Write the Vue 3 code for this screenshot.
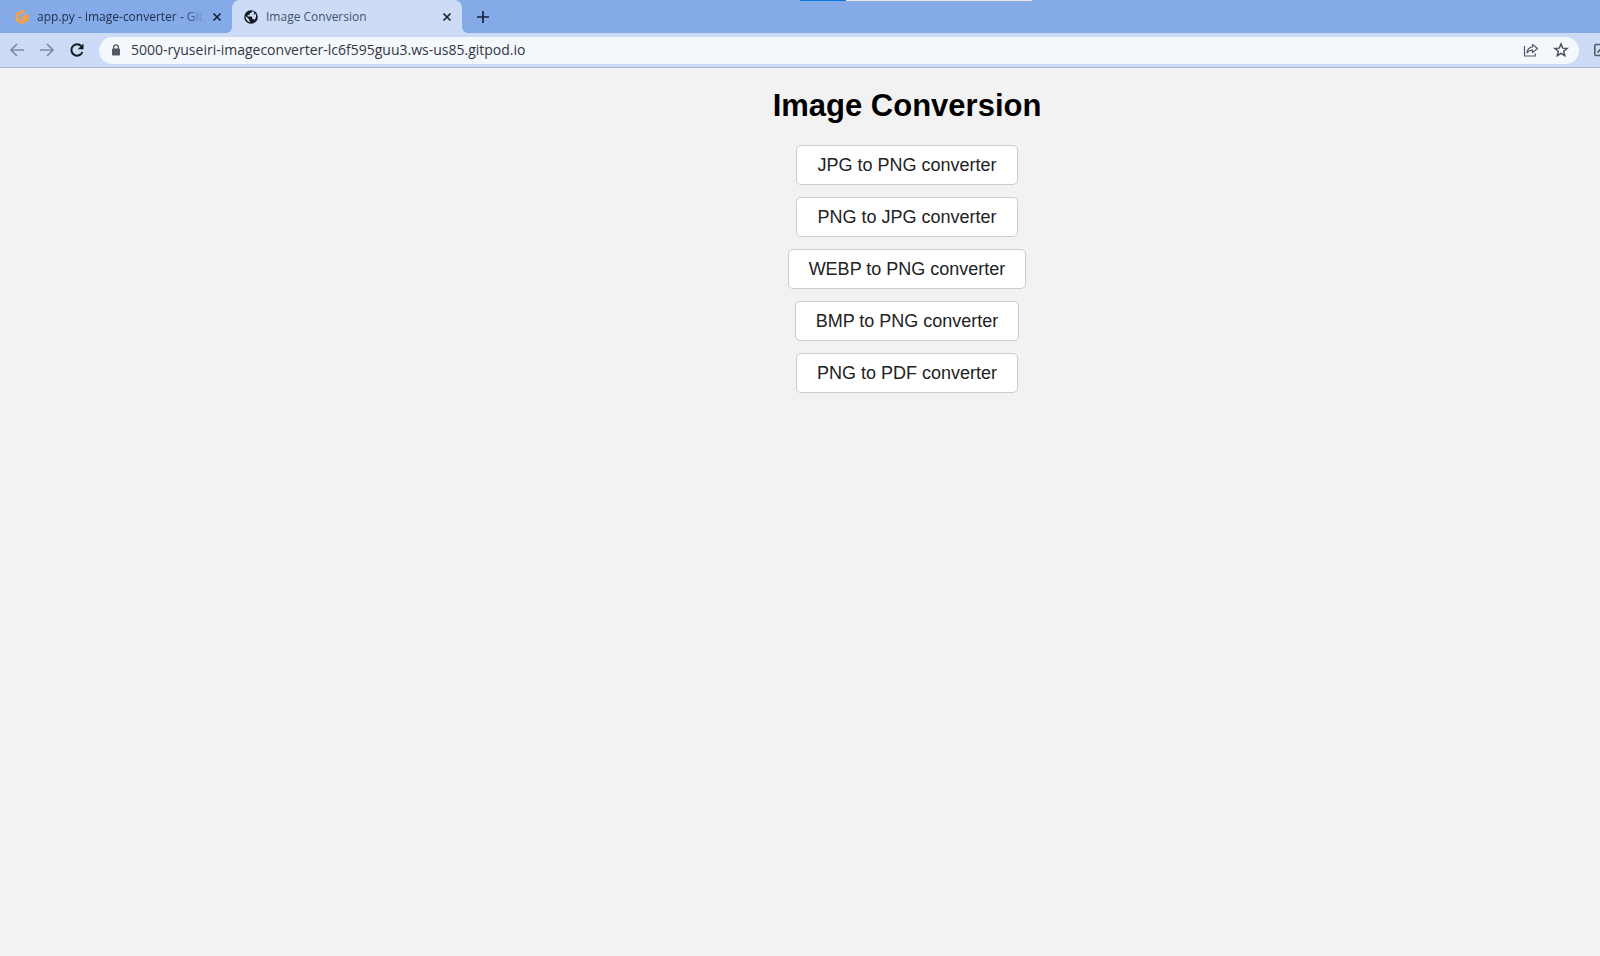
<script setup>
const converters = [
  'JPG to PNG converter',
  'PNG to JPG converter',
  'WEBP to PNG converter',
  'BMP to PNG converter',
  'PNG to PDF converter',
]
</script>

<template>
  <div class="browser">
    <div class="load-strip"></div>
    <header class="tabs">
      <div class="tab first">
        <svg class="fav" viewBox="0 0 16 16" aria-hidden="true">
          <path d="M9.2 2.300 3 5.500V10.800L8 13.600 13 10.800V6.600L8.300 9.100" fill="none" stroke="#ff9f3c" stroke-width="2.900" stroke-linecap="round" stroke-linejoin="round" />
        </svg>
        <span class="title faded">app.py - image-converter - Git</span>
        <button class="close" aria-label="Close app.py tab">
          <svg viewBox="0 0 10 10"><path d="M1.5 1.5l7 7m0-7l-7 7" stroke="#17233a" stroke-width="1.7" /></svg>
        </button>
      </div>
      <div class="tab active">
        <svg class="fav" viewBox="0 0 16 16" aria-hidden="true">
          <circle cx="8" cy="8" r="6.8" fill="#15181e" />
          <path d="M8.8 1.9v1.2q0 1-1 1H6.7v1.2q0 .7-.8.7H4.7v1.6h3.7q.8 0 .8.8v1.7h.9q.9 0 1.2.8a5.4 5.4 0 0 0 1.1-6.3l-1.1 1.1H9.8V5.4h1.3V3.3A5.2 5.2 0 0 0 8.8 1.9zM2.7 7.1l3.5 3.4v.8q0 .8.9.9v1.1A5.4 5.4 0 0 1 2.7 7.1z" fill="#ccdcf6" />
        </svg>
        <span class="title">Image Conversion</span>
        <button class="close" aria-label="Close Image Conversion tab">
          <svg viewBox="0 0 10 10"><path d="M1.5 1.5l7 7m0-7l-7 7" stroke="#17233a" stroke-width="1.7" /></svg>
        </button>
      </div>
      <button class="new-tab" aria-label="New tab">
        <svg viewBox="0 0 12 12"><path d="M6 0v12M0 6h12" stroke="#17233a" stroke-width="1.7" /></svg>
      </button>
    </header>

    <div class="toolbar">
      <button class="nav" aria-label="Back">
        <svg viewBox="0 0 16 16"><path d="M15 8H2.5M8 2L2 8l6 6" fill="none" stroke="#7f8ba3" stroke-width="1.7" /></svg>
      </button>
      <button class="nav" aria-label="Forward">
        <svg viewBox="0 0 16 16"><path d="M1 8h12.500M8 2l6 6-6 6" fill="none" stroke="#7f8ba3" stroke-width="1.7" /></svg>
      </button>
      <button class="nav" aria-label="Reload">
        <svg viewBox="0 0 16 16">
          <path d="M13.400 10A5.700 5.700 0 1 1 12.300 4.100" fill="none" stroke="#17191e" stroke-width="2" />
          <path d="M14.500 1.500v5.700H8.800z" fill="#17191e" />
        </svg>
      </button>
      <div class="omnibox">
        <svg class="lock" viewBox="0 0 10 12" aria-hidden="true">
          <path d="M2.700 5V3.200a2.300 2.300 0 0 1 4.600 0V5" fill="none" stroke="#55595f" stroke-width="1.300" />
          <rect x="1" y="4.500" width="8" height="7" rx="1" fill="#55595f" />
        </svg>
        <input class="url" type="text" aria-label="Address" value="5000-ryuseiri-imageconverter-lc6f595guu3.ws-us85.gitpod.io" />
        <button class="action" aria-label="Share this page">
          <svg viewBox="0 0 16 16" fill="none" stroke="#555b65" stroke-width="1.200">
            <path d="M1.500 4v10h10.800v-2.500" />
            <path d="M9.500 2.500l5 4-5 4V8.200Q6 8 4 10.800q.4-5.300 5.500-6z" stroke-linejoin="round" />
          </svg>
        </button>
        <button class="action" aria-label="Bookmark this page">
          <svg viewBox="0 0 16 16"><path d="M8 1.900l1.700 4.200 4.500.3-3.500 2.900 1.100 4.400L8 11.300l-3.800 2.400 1.100-4.400-3.500-2.900 4.500-.3z" fill="none" stroke="#454a53" stroke-width="1.400" /></svg>
        </button>
      </div>
      <button class="extension" aria-label="Extension">
        <svg viewBox="0 0 16 16" fill="none" stroke="#555b65" stroke-width="1.600">
          <rect x="1.800" y="2.500" width="12" height="11" rx="1" />
          <path d="M4.500 10.500L9 6" />
        </svg>
      </button>
    </div>

    <main class="page">
      <h1>Image Conversion</h1>
      <button v-for="name in converters" :key="name" class="convert">{{ name }}</button>
    </main>
  </div>
</template>

<style>
body {
  background: #f2f2f2;
}
</style>

<style scoped>
.browser {
  position: relative;
  min-height: 100vh;
  overflow: hidden;
  background: #f2f2f2;
  font-family: "Open Sans", "Noto Sans", sans-serif;
}
button {
  padding: 0;
  border: 0;
  background: none;
}
svg {
  display: block;
}
.load-strip {
  position: absolute;
  top: 0;
  left: 50%;
  width: 232px;
  height: 1px;
  background: linear-gradient(to right, #0878d8 46px, #e6e6e6 46px);
}
.tabs {
  display: flex;
  height: 33px;
  background: #84abe8;
}
.tab {
  display: flex;
  align-items: center;
  box-sizing: border-box;
  width: 230px;
  padding: 0 10px 0 11px;
}
.tab.first {
  width: 232px;
  padding-left: 14px;
}
.tab.active {
  position: relative;
  background: #ccdcf6;
  border-radius: 8px 8px 0 0;
}
.tab.active::before,
.tab.active::after {
  content: "";
  position: absolute;
  bottom: 0;
  width: 6px;
  height: 6px;
}
.tab.active::before {
  right: 100%;
  background: radial-gradient(circle at 0 0, transparent 6px, #ccdcf6 6px);
}
.tab.active::after {
  left: 100%;
  background: radial-gradient(circle at 100% 0, transparent 6px, #ccdcf6 6px);
}
.fav {
  flex: none;
  width: 16px;
  height: 16px;
  margin-right: 7px;
}
.title {
  flex: 1;
  min-width: 0;
  overflow: hidden;
  white-space: nowrap;
  font-size: 12px;
  line-height: 18px;
  color: #46536a;
}
.faded {
  color: #20304c;
  mask-image: linear-gradient(to right, #000 calc(100% - 24px), transparent);
}
.close {
  flex: none;
  margin-left: 6px;
}
.close svg {
  width: 10px;
  height: 10px;
}
.new-tab {
  margin-left: 15px;
}
.new-tab svg {
  width: 12px;
  height: 12px;
}
.toolbar {
  display: flex;
  align-items: center;
  gap: 14px;
  box-sizing: border-box;
  height: 35px;
  padding-left: 9px;
  background: #ccdcf6;
  border-bottom: 1px solid #a3b4d3;
}
.nav {
  flex: none;
}
.nav svg,
.action svg,
.extension svg {
  width: 16px;
  height: 16px;
}
.omnibox {
  display: flex;
  flex: 1;
  align-items: center;
  height: 27px;
  padding: 0 10px 0 12px;
  border-radius: 14px;
  background: #f4f8fd;
}
.lock {
  width: 10px;
  height: 12px;
  margin-right: 10px;
}
.url {
  flex: 1;
  min-width: 0;
  padding: 0;
  border: 0;
  outline: 0;
  background: none;
  color: #33373e;
  font-family: inherit;
  font-size: 14px;
  line-height: 20px;
}
.action {
  margin-left: 14px;
}
.extension {
  flex: none;
  width: 7px;
  overflow: hidden;
}
.page {
  display: flex;
  flex-direction: column;
  align-items: center;
  gap: 12px;
  margin-left: 214px;
  padding-top: 19px;
  font-family: "Liberation Sans", Arial, sans-serif;
}
h1 {
  margin: 0 0 8px;
  font-size: 31px;
  line-height: 38px;
  color: #000;
}
.convert {
  box-sizing: border-box;
  height: 40px;
  padding: 0 20px;
  border: 1px solid #ccc;
  border-radius: 5px;
  background: #fff;
  color: #222;
  font-family: inherit;
  font-size: 18px;
}
</style>
